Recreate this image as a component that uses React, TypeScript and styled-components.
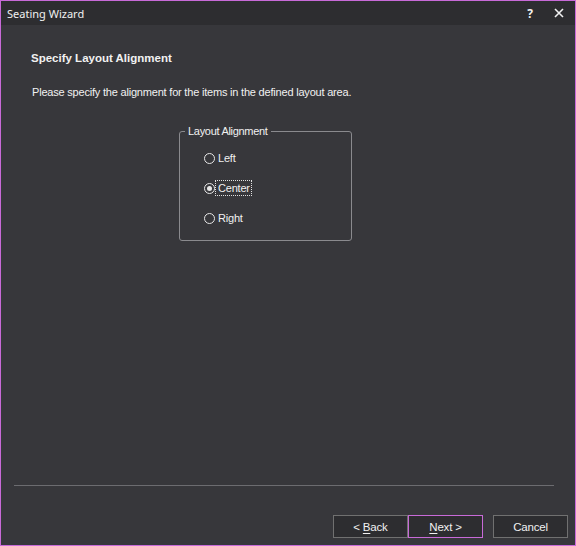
import React, { useState } from 'react'
import styled, { createGlobalStyle } from 'styled-components'

//-----------------------------------------------------------------------------
// Global
//-----------------------------------------------------------------------------
const GlobalStyle = createGlobalStyle`
  html, body {
    margin: 0;
    padding: 0;
    background: #37373b;
  }
  * {
    box-sizing: border-box;
  }
`

//-----------------------------------------------------------------------------
// Data
//-----------------------------------------------------------------------------
const alignments = ['Left', 'Center', 'Right']

//-----------------------------------------------------------------------------
// Component
//-----------------------------------------------------------------------------
const App = () => {
  const [ alignment, setAlignment ] = useState('Center')

  return (
    <>
      <GlobalStyle />
      <Window>
        <TitleBar>
          <Title>Seating Wizard</Title>
          <TitleControls>
            <HelpButton>?</HelpButton>
            <CloseButton>
              <svg width="10" height="10" viewBox="0 0 10 10">
                <path d="M1 1 L9 9 M9 1 L1 9" stroke="#f1f1f1" strokeWidth="1.6" />
              </svg>
            </CloseButton>
          </TitleControls>
        </TitleBar>
        <Body>
          <Heading>Specify Layout Alignment</Heading>
          <Description>Please specify the alignment for the items in the defined layout area.</Description>
          <GroupBox>
            <Legend>Layout Alignment</Legend>
            <RadioList>
              {alignments.map(item => (
                <RadioRow key={item} onClick={() => setAlignment(item)}>
                  <RadioCircle checked={alignment === item} />
                  <RadioLabel focused={alignment === item}>{item}</RadioLabel>
                </RadioRow>
              ))}
            </RadioList>
          </GroupBox>
          <Separator />
          <ButtonRow>
            <NavButtons>
              <Button>&lt; <u>B</u>ack</Button>
              <Button active><u>N</u>ext &gt;</Button>
            </NavButtons>
            <Button>Cancel</Button>
          </ButtonRow>
        </Body>
      </Window>
    </>
  )
}

//-----------------------------------------------------------------------------
// Styled Components
//-----------------------------------------------------------------------------
const Window = styled.div`
  width: 576px;
  height: 546px;
  border: 1px solid #c86ad8;
  display: flex;
  flex-direction: column;
  background: #37373b;
  color: #f1f1f1;
  font-family: "Liberation Sans", Arial, sans-serif;
  font-size: 11px;
`

const TitleBar = styled.div`
  height: 24px;
  flex-shrink: 0;
  background: #2d2d30;
  display: flex;
  align-items: center;
  justify-content: space-between;
  padding-left: 6px;
`

const Title = styled.div`
  font-family: "Noto Sans", "Open Sans", sans-serif;
  font-size: 11px;
  color: #f1f1f1;
`

const TitleControls = styled.div`
  display: flex;
  align-items: center;
  height: 100%;
`

const HelpButton = styled.div`
  width: 26px;
  text-align: center;
  font-family: "Noto Sans", sans-serif;
  font-size: 12px;
  font-weight: bold;
`

const CloseButton = styled.div`
  width: 32px;
  height: 100%;
  display: flex;
  align-items: center;
  justify-content: center;
`

const Body = styled.div`
  flex: 1;
  display: flex;
  flex-direction: column;
`

const Heading = styled.div`
  margin: 26px 0 0 30px;
  font-size: 11.5px;
  font-weight: bold;
  line-height: 14px;
`

const Description = styled.div`
  margin: 20px 0 0 31px;
  line-height: 14px;
  font-size: 11px;
  letter-spacing: -0.2px;
`

const GroupBox = styled.fieldset`
  margin: 26px 0 0 178px;
  width: 173px;
  height: 116px;
  border: 1px solid #8a8a8e;
  border-radius: 3px;
  padding: 0 0 0 24px;
`

const Legend = styled.legend`
  margin-left: -19px;
  padding: 0 3px;
  line-height: 12px;
  letter-spacing: -0.3px;
`

const RadioList = styled.div`
  display: flex;
  flex-direction: column;
  gap: 14px;
  padding-top: 13px;
`

const RadioRow = styled.div`
  display: flex;
  align-items: center;
  height: 16px;
  cursor: default;
`

const RadioCircle = styled.span<{ checked: boolean }>`
  width: 11px;
  height: 11px;
  border: 1px solid #e8e8e8;
  border-radius: 50%;
  display: flex;
  align-items: center;
  justify-content: center;
  &::after {
    content: '';
    width: 5px;
    height: 5px;
    border-radius: 50%;
    background: #e8e8e8;
    display: ${({ checked }) => checked ? 'block' : 'none'};
  }
`

const RadioLabel = styled.span<{ focused: boolean }>`
  padding: 0 1px 0 2px;
  line-height: 14px;
  border: 1px dotted ${({ focused }) => focused ? '#e0e0e0' : 'transparent'};
  letter-spacing: -0.2px;
`

const Separator = styled.div`
  margin: auto 21px 0 13px;
  height: 1px;
  background: #6c6c70;
`

const ButtonRow = styled.div`
  display: flex;
  justify-content: flex-end;
  gap: 10px;
  padding: 29px 7px 7px 0;
`

const NavButtons = styled.div`
  display: flex;
`

const Button = styled.button<{ active?: boolean }>`
  width: 75px;
  height: 23px;
  background: #2d2d30;
  border: 1px solid ${({ active }) => active ? '#c86ad8' : '#707070'};
  color: #f1f1f1;
  font-family: "Liberation Sans", Arial, sans-serif;
  font-size: 11.5px;
  padding: 0;
  letter-spacing: -0.2px;
  u {
    text-decoration: underline;
    text-underline-offset: 2px;
  }
`

export default App
